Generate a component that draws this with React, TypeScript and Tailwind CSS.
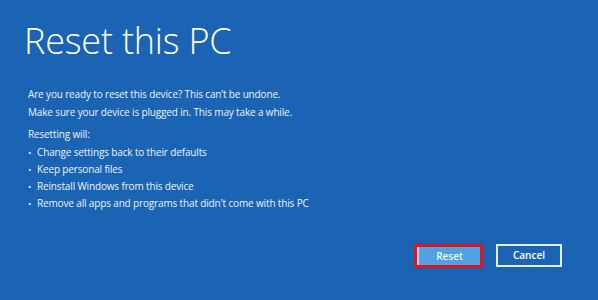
import React from 'react';

const items = [
  'Change settings back to their defaults',
  'Keep personal files',
  'Reinstall Windows from this device',
  "Remove all apps and programs that didn't come with this PC",
];

export default function App() {
  return (
    <div
      className="w-[598px] h-[300px] bg-[#1b63b3] text-[#eef4fb] flex flex-col overflow-hidden"
      style={{ fontFamily: '"Open Sans", "Noto Sans", sans-serif' }}
    >
      {/* Title */}
      <h1 className="pl-[24px] pt-[17px] text-[36px] font-light leading-[48px] tracking-[-0.2px] text-white">
        Reset this PC
      </h1>

      {/* Body */}
      <div className="pl-[28px] pt-[20px] text-[10px] tracking-[-0.15px] leading-[18px]">
        <p>Are you ready to reset this device? This can&rsquo;t be undone.</p>
        <p>Make sure your device is plugged in. This may take a while.</p>
        <p className="mt-[5px] leading-[17px]">Resetting will:</p>
        <ul className="mt-[1px]">
          {items.map((t) => (
            <li key={t} className="flex items-center leading-[17px]">
              <span className="w-[9px] text-[9px]">&bull;</span>
              <span>{t}</span>
            </li>
          ))}
        </ul>
      </div>

      {/* Buttons */}
      <div className="mt-auto mb-[32px] mr-[36px] flex justify-end items-start gap-[13px]">
        <div className="border-[3px] border-[#e3141e]">
          <button className="block w-[63px] h-[18px] bg-[#4ea1e3] border-l-2 border-[#a9d3f3] text-[10px] font-semibold text-[#eef6fd]">
            Reset
          </button>
        </div>
        <button className="block w-[66px] h-[23px] border-[2px] border-[#e4f0fb] text-[10px] font-semibold text-white">
          Cancel
        </button>
      </div>
    </div>
  );
}
